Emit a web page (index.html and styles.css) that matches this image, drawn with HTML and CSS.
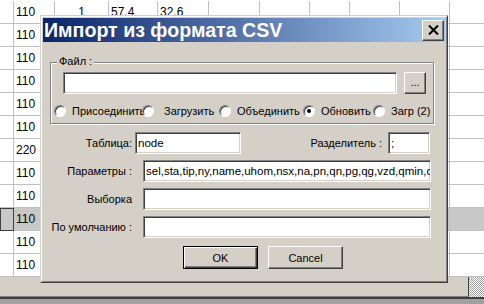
FILE: index.html
```html
<!DOCTYPE html>
<html lang="ru">
<head>
<meta charset="utf-8">
<title>Импорт из формата CSV</title>
<link rel="stylesheet" href="styles.css">
</head>
<body>
<div class="screen">
  <div class="sheet">
    <div class="row"><div class="c w0"></div><div class="c w1">110</div><div class="c w2 ctr">1</div><div class="c w3">57.4</div><div class="c w4">32.6</div><div class="c w5"></div><div class="c w6"></div><div class="c w7"></div><div class="c w8"></div><div class="c w9"></div><div class="c w10"></div></div>
    <div class="row"><div class="c w0"></div><div class="c w1">110</div><div class="c w2"></div><div class="c w3"></div><div class="c w4"></div><div class="c w5"></div><div class="c w6"></div><div class="c w7"></div><div class="c w8"></div><div class="c w9"></div><div class="c w10"></div></div>
    <div class="row"><div class="c w0"></div><div class="c w1">110</div><div class="c w2"></div><div class="c w3"></div><div class="c w4"></div><div class="c w5"></div><div class="c w6"></div><div class="c w7"></div><div class="c w8"></div><div class="c w9"></div><div class="c w10"></div></div>
    <div class="row"><div class="c w0"></div><div class="c w1">110</div><div class="c w2"></div><div class="c w3"></div><div class="c w4"></div><div class="c w5"></div><div class="c w6"></div><div class="c w7"></div><div class="c w8"></div><div class="c w9"></div><div class="c w10"></div></div>
    <div class="row"><div class="c w0"></div><div class="c w1">110</div><div class="c w2"></div><div class="c w3"></div><div class="c w4"></div><div class="c w5"></div><div class="c w6"></div><div class="c w7"></div><div class="c w8"></div><div class="c w9"></div><div class="c w10"></div></div>
    <div class="row"><div class="c w0"></div><div class="c w1">110</div><div class="c w2"></div><div class="c w3"></div><div class="c w4"></div><div class="c w5"></div><div class="c w6"></div><div class="c w7"></div><div class="c w8"></div><div class="c w9"></div><div class="c w10"></div></div>
    <div class="row"><div class="c w0"></div><div class="c w1">220</div><div class="c w2"></div><div class="c w3"></div><div class="c w4"></div><div class="c w5"></div><div class="c w6"></div><div class="c w7"></div><div class="c w8"></div><div class="c w9"></div><div class="c w10"></div></div>
    <div class="row"><div class="c w0"></div><div class="c w1">110</div><div class="c w2"></div><div class="c w3"></div><div class="c w4"></div><div class="c w5"></div><div class="c w6"></div><div class="c w7"></div><div class="c w8"></div><div class="c w9"></div><div class="c w10"></div></div>
    <div class="row"><div class="c w0"></div><div class="c w1">110</div><div class="c w2"></div><div class="c w3"></div><div class="c w4"></div><div class="c w5"></div><div class="c w6"></div><div class="c w7"></div><div class="c w8"></div><div class="c w9"></div><div class="c w10"></div></div>
    <div class="row sel"><div class="c w0 cur"></div><div class="c w1">110</div><div class="c w2"></div><div class="c w3"></div><div class="c w4"></div><div class="c w5"></div><div class="c w6"></div><div class="c w7"></div><div class="c w8"></div><div class="c w9"></div><div class="c w10"></div></div>
    <div class="row"><div class="c w0"></div><div class="c w1">110</div><div class="c w2"></div><div class="c w3"></div><div class="c w4"></div><div class="c w5"></div><div class="c w6"></div><div class="c w7"></div><div class="c w8"></div><div class="c w9"></div><div class="c w10"></div></div>
    <div class="row"><div class="c w0"></div><div class="c w1">110</div><div class="c w2"></div><div class="c w3"></div><div class="c w4"></div><div class="c w5"></div><div class="c w6"></div><div class="c w7"></div><div class="c w8"></div><div class="c w9"></div><div class="c w10"></div></div>
  </div>
  <div class="status"><div class="panel"></div><div class="grip"></div></div>
  <div class="bottombar"></div>

  <div class="dialog">
    <div class="titlebar">
      <span class="title">Импорт из формата CSV</span>
      <div class="close"><svg width="11" height="10" viewBox="0 0 11 10"><path d="M1 0.5 L10 9.5 M10 0.5 L1 9.5" stroke="#000" stroke-width="2" fill="none"/></svg></div>
    </div>
    <div class="body">
      <div class="group">
        <span class="legend">Файл :</span>
        <div class="filerow">
          <div class="field file"></div>
          <div class="btn dots">...</div>
        </div>
        <div class="radios">
          <div class="ritem"><span class="radio"></span><span>Присоединить</span></div>
          <div class="ritem"><span class="radio"></span><span class="sp">Загрузить</span></div>
          <div class="ritem"><span class="radio"></span><span>Объединить</span></div>
          <div class="ritem"><span class="radio on"></span><span>Обновить</span></div>
          <div class="ritem"><span class="radio"></span><span>Загр (2)</span></div>
        </div>
      </div>
      <div class="frow">
        <span class="lbl">Таблица:</span>
        <div class="field tbl">node</div>
        <span class="lbl2">Разделитель :</span>
        <div class="field sep">;</div>
      </div>
      <div class="frow">
        <span class="lbl">Параметры :</span>
        <div class="field wide">sel,sta,tip,ny,name,uhom,nsx,na,pn,qn,pg,qg,vzd,qmin,qmax,ps,qs</div>
      </div>
      <div class="frow">
        <span class="lbl">Выборка</span>
        <div class="field wide"></div>
      </div>
      <div class="frow">
        <span class="lbl">По умолчанию :</span>
        <div class="field wide"></div>
      </div>
      <div class="buttons">
        <div class="btn def">OK</div>
        <div class="btn">Cancel</div>
      </div>
    </div>
  </div>
</div>
</body>
</html>
```

FILE: styles.css
```css
* { box-sizing: border-box; }
html, body { margin: 0; padding: 0; }
body {
  width: 484px;
  height: 304px;
  overflow: hidden;
  background: #fff;
  font-family: "Liberation Sans", Arial, sans-serif;
  color: #000;
}
.screen {
  position: relative;
  width: 484px;
  height: 304px;
  overflow: hidden;
  display: flex;
  flex-direction: column;
}
.sheet {
  flex: none;
  height: 277px;
  padding-top: 1px;
  display: flex;
  flex-direction: column;
}
.row { display: flex; flex: none; height: 23px; }
.row.sel { background: #c8c8c8; }
.c {
  flex: none;
  height: 23px;
  border-right: 1px solid #c0c0c0;
  border-bottom: 1px solid #c0c0c0;
  font-size: 12px;
  line-height: 22px;
  padding-left: 2px;
  white-space: nowrap;
  overflow: hidden;
}
.c.ctr { text-align: center; padding-left: 0; }
.c.cur { border: 1px solid #404040; }
.w0 { width: 14px; }
.w1 { width: 41px; }
.w2 { width: 54px; }
.w3 { width: 49px; }
.w4 { width: 51px; }
.w5 { width: 51px; }
.w6 { width: 50px; }
.w7 { width: 40px; }
.w8 { width: 50px; }
.w9 { width: 50px; }
.w10 { width: 34px; border-right: 0; }

.status { flex: none; height: 20px; display: flex; }
.status .panel {
  width: 469px;
  background: #d4d0c8;
  border-right: 1px solid #404040;
  border-bottom: 1px solid #808080;
}
.status .grip {
  flex: 1;
  background: repeating-conic-gradient(#ffffff 0 25%, #a0a0a0 0 50%) 0 0 / 2px 2px;
}
.bottombar {
  flex: 1;
  background: #a0a0a0;
  border-top: 2px solid #404040;
}

/* dialog window */
.dialog {
  position: absolute;
  left: 40px;
  top: 15px;
  width: 408px;
  height: 268px;
  background: #d4d0c8;
  border: 1px solid;
  border-color: #d4d0c8 #404040 #404040 #d4d0c8;
  box-shadow: inset 1px 1px #fff, inset -1px -1px #808080;
  padding: 2px;
  display: flex;
  flex-direction: column;
  font-size: 11px;
}
.titlebar {
  flex: none;
  height: 24px;
  background: linear-gradient(to right, #0a246a, #a6caf0);
  display: flex;
  align-items: center;
  justify-content: space-between;
  padding: 0 1px 0 1px;
}
.title {
  color: #fff;
  font-weight: bold;
  font-size: 19.6px;
  line-height: 24px;
  white-space: nowrap;
}
.close {
  width: 22px;
  height: 21px;
  background: #d4d0c8;
  border: 1px solid;
  border-color: #fff #404040 #404040 #fff;
  box-shadow: inset -1px -1px #808080;
  display: flex;
  align-items: center;
  justify-content: center;
}
.close svg { display: block; }

.body { flex: 1; display: flex; flex-direction: column; }

.group {
  position: relative;
  margin: 20px 0 0 7px;
  width: 384px;
  height: 62px;
  border: 1px solid #808080;
  box-shadow: inset 1px 1px #fff, 1px 1px #fff;
  padding: 9px 7px 0 12px;
}
.legend {
  position: absolute;
  top: -9px;
  left: 6px;
  padding: 0 2px;
  background: #d4d0c8;
  line-height: 14px;
}
.filerow { display: flex; }
.field {
  height: 22px;
  background: #fff;
  border: 1px solid;
  border-color: #808080 #fff #fff #808080;
  box-shadow: inset 1px 1px #404040, inset -1px -1px #d4d0c8;
  padding-left: 2px;
  font-size: 11.5px;
  line-height: 20px;
  white-space: nowrap;
  overflow: hidden;
}
.field.file { width: 335px; }
.btn {
  height: 23px;
  width: 75px;
  background: #d4d0c8;
  border: 1px solid;
  border-color: #fff #404040 #404040 #fff;
  box-shadow: inset -1px -1px #808080;
  display: flex;
  align-items: center;
  justify-content: center;
}
.btn.dots {
  width: 22px;
  height: 22px;
  margin-left: 7px;
  font-size: 11px;
  padding-bottom: 2px;
}
.btn.def {
  border: 1px solid #000;
  box-shadow: inset 1px 1px #fff, inset -1px -1px #404040, inset -2px -2px #808080;
}

.radios {
  margin-top: 10px;
  margin-left: -9px;
  height: 14px;
  display: grid;
  grid-template-columns: 88px 77px 84px 70px auto;
}
.ritem { display: flex; align-items: center; gap: 6px; white-space: nowrap; }
.ritem .sp { margin-left: 4px; }
.radio {
  flex: none;
  width: 12px;
  height: 12px;
  border-radius: 50%;
  background: #fff;
  border: 1px solid;
  border-color: #808080 #fff #fff #808080;
  box-shadow: inset 1px 1px #404040;
  position: relative;
}
.radio.on::after {
  content: "";
  position: absolute;
  left: 3px;
  top: 3px;
  width: 4px;
  height: 4px;
  border-radius: 50%;
  background: #000;
}

.frow {
  display: flex;
  align-items: center;
  height: 22px;
  margin-top: 6px;
}
.group + .frow { margin-top: 8px; }
.lbl { width: 89px; text-align: right; white-space: nowrap; }
.lbl2 { margin-left: auto; white-space: nowrap; }
.field.tbl { width: 106px; margin-left: 3px; }
.field.sep { width: 42px; margin-left: 6px; margin-right: 15px; }
.field.wide { width: 288px; margin-left: 11px; }

.buttons {
  display: flex;
  gap: 10px;
  margin-top: 8px;
  padding-left: 140px;
}
```
